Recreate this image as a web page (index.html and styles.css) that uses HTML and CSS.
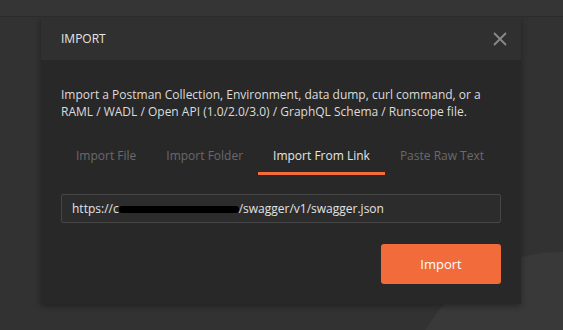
FILE: index.html
```html
<!DOCTYPE html>
<html lang="en">
<head>
    <meta charset="UTF-8">
    <meta name="viewport" content="width=device-width, initial-scale=1.0">
    <title>Import</title>
    <link rel="stylesheet" href="styles.css">
</head>
<body>
    <div class="topbar"></div>
    <div class="backdrop">
        <div class="logo-bg"></div>
        <div class="modal">
            <div class="modal-header">
                <span class="title">IMPORT</span>
                <svg class="close" width="14" height="14" viewBox="0 0 14 14">
                    <path d="M1 1 L13 13 M13 1 L1 13" stroke="#8a8a8a" stroke-width="1.8" fill="none"/>
                </svg>
            </div>
            <div class="modal-body">
                <p class="desc">Import a Postman Collection, Environment, data dump, curl command, or a RAML / WADL / Open API (1.0/2.0/3.0) / GraphQL Schema / Runscope file.</p>
                <div class="tabs">
                    <span class="tab">Import File</span>
                    <span class="tab">Import Folder</span>
                    <span class="tab active">Import From Link</span>
                    <span class="tab">Paste Raw Text</span>
                </div>
                <div class="link-input">
                    <span class="url">https://c<span class="hidden"></span>/swagger/v1/swagger.json</span>
                </div>
                <div class="actions">
                    <button class="btn-import">Import</button>
                </div>
            </div>
        </div>
    </div>
</body>
</html>
```

FILE: styles.css
```css
body{
    margin: 0;
    width: 563px;
    height: 330px;
    overflow: hidden;
    background-color: #333333;
    font-family: "Open Sans", "Liberation Sans", sans-serif;
}
.topbar{
    height: 16px;
    background-color: #353535;
    border-bottom: 1px solid #2b2b2b;
}
.backdrop{
    position: relative;
    height: 313px;
    overflow: hidden;
    background-color: #323232;
    padding-left: 41px;
}
.logo-bg{
    position: absolute;
    left: 405px;
    top: 235px;
    width: 310px;
    height: 310px;
    border-radius: 50%;
    background-color: #393939;
}
.modal{
    position: relative;
    width: 480px;
    background-color: #282828;
    box-shadow: 0 2px 6px rgba(0, 0, 0, 0.35);
}
.modal-header{
    height: 43px;
    background-color: #303030;
    display: flex;
    align-items: center;
    justify-content: space-between;
    padding: 0 14px 0 20px;
}
.title{
    color: #e6e6e6;
    font-size: 12px;
}
.close{
    display: block;
}
.modal-body{
    padding: 26px 20px 20px 20px;
}
.desc{
    margin: 0;
    color: #dcdcdc;
    font-size: 12px;
    line-height: 17px;
}
.tabs{
    display: flex;
    margin-top: 18px;
}
.tab{
    color: #6a6a6a;
    font-size: 12px;
    line-height: 17px;
    white-space: nowrap;
    padding: 9px 15px 8px 15px;
    border-bottom: 3px solid transparent;
}
.tab.active{
    color: #e6e6e6;
    border-bottom-color: #f26b3a;
}
.link-input{
    box-sizing: border-box;
    margin-top: 19px;
    height: 29px;
    border: 1px solid #464646;
    border-radius: 2px;
    background-color: #2c2c2c;
    display: flex;
    align-items: center;
    padding-left: 10px;
}
.url{
    color: #e2e2e2;
    font-size: 12px;
    white-space: nowrap;
}
.hidden{
    display: inline-block;
    width: 120px;
    height: 7px;
    vertical-align: middle;
    background-color: #000;
    border-radius: 3px;
}
.actions{
    display: flex;
    justify-content: flex-end;
    margin-top: 21px;
}
.btn-import{
    width: 120px;
    height: 40px;
    background-color: #f26b3a;
    color: #fff;
    border: none;
    border-radius: 3px;
    font-family: "Open Sans", "Liberation Sans", sans-serif;
    font-size: 13px;
}
```
